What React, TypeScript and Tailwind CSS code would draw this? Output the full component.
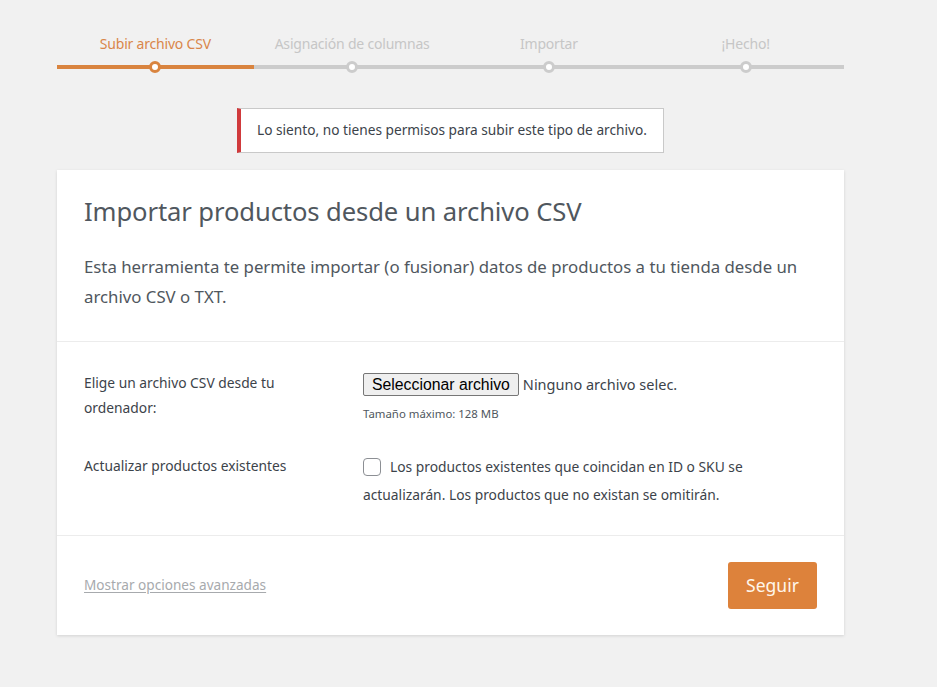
import React from "react";

const steps = ["Subir archivo CSV", "Asignación de columnas", "Importar", "¡Hecho!"];

export default function App() {
  return (
    <div
      className="min-h-[687px] w-full bg-[#f1f1f1] pt-[33px]"
      style={{ fontFamily: '"Noto Sans", "Open Sans", sans-serif' }}
    >
      <div className="mx-[57px] w-[787px]">
        {/* Stepper */}
        <div className="grid grid-cols-4">
          {steps.map((s, i) => {
            const active = i === 0;
            return (
              <div key={s} className="flex flex-col items-center">
                <div
                  className={`h-[22px] text-[14px] leading-[22px] tracking-[-0.2px] ${
                    active ? "text-[#d9864a]" : "text-[#c6c6c6]"
                  }`}
                >
                  {s}
                </div>
                <div className="relative mt-[10px] h-[4px] w-full">
                  <div className={`h-full w-full ${active ? "bg-[#d9843f]" : "bg-[#cccccc]"}`} />
                  <div
                    className={`absolute left-1/2 top-1/2 h-[12px] w-[12px] -translate-x-1/2 -translate-y-1/2 rounded-full border-[3px] bg-white ${
                      active ? "border-[#d9843f]" : "border-[#cccccc]"
                    }`}
                  />
                </div>
              </div>
            );
          })}
        </div>

        {/* Notice */}
        <div className="mt-[39px] flex justify-center">
          <div className="flex h-[45px] w-[427px] items-center border border-[#c9c9c9] border-l-[4px] border-l-[#d03a3c] bg-white pl-[16px] text-[13.7px] text-[#3c434a]">
            Lo siento, no tienes permisos para subir este tipo de archivo.
          </div>
        </div>

        {/* Card */}
        <div className="mt-[17px] bg-white shadow-[0_1px_3px_rgba(0,0,0,0.13)]">
          <div className="border-b border-[#ececec] px-[27px] pb-[29px] pt-[25px]">
            <h1 className="text-[25.6px] leading-[34px] tracking-[-0.1px] text-[#50575e]">
              Importar productos desde un archivo CSV
            </h1>
            <p className="mt-[23px] text-[16.8px] leading-[30px] text-[#50575e]">
              Esta herramienta te permite importar (o fusionar) datos de productos a tu tienda desde un
              <br />
              archivo CSV o TXT.
            </p>
          </div>

          <div className="border-b border-[#ececec] px-[27px] pb-[26px] pt-[28px]">
            <div className="grid grid-cols-[279px_1fr]">
              <div className="text-[13.8px] leading-[25px] text-[#3c434a]">
                Elige un archivo CSV desde tu
                <br />
                ordenador:
              </div>
              <div className="pt-[3px]">
                <div className="flex items-center">
                  <span
                    className="h-[23px] rounded-[2px] border border-[#767676] bg-[#efefef] px-[8px] text-[15.8px] leading-[21px] text-black"
                    style={{ fontFamily: '"Liberation Sans", Arial, sans-serif' }}
                  >
                    Seleccionar archivo
                  </span>
                  <span className="ml-[4px] text-[14.5px] text-[#3c434a]">Ninguno archivo selec.</span>
                </div>
                <div className="mt-[11px] text-[11.4px] leading-[14px] text-[#50575e]">Tamaño máximo: 128 MB</div>
              </div>

              <div className="mt-[32px] text-[13.8px] leading-[25px] text-[#3c434a]">
                Actualizar productos existentes
              </div>
              <div className="mt-[32px] text-[13.8px] leading-[28px] text-[#3c434a]">
                <span className="mr-[9px] inline-block h-[18px] w-[18px] rounded-[4px] border border-[#8c8f94] align-[-4px]" />
                Los productos existentes que coincidan en ID o SKU se
                <br />
                actualizarán. Los productos que no existan se omitirán.
              </div>
            </div>
          </div>

          <div className="flex items-center justify-between px-[27px] pb-[26px] pt-[26px]">
            <a className="text-[13.6px] text-[#a7aaad] underline underline-offset-[2px]">Mostrar opciones avanzadas</a>
            <button className="h-[47px] w-[89px] rounded-[3px] bg-[#dd823b] text-[17.5px] text-[#fff6ea]">
              Seguir
            </button>
          </div>
        </div>
      </div>
    </div>
  );
}
